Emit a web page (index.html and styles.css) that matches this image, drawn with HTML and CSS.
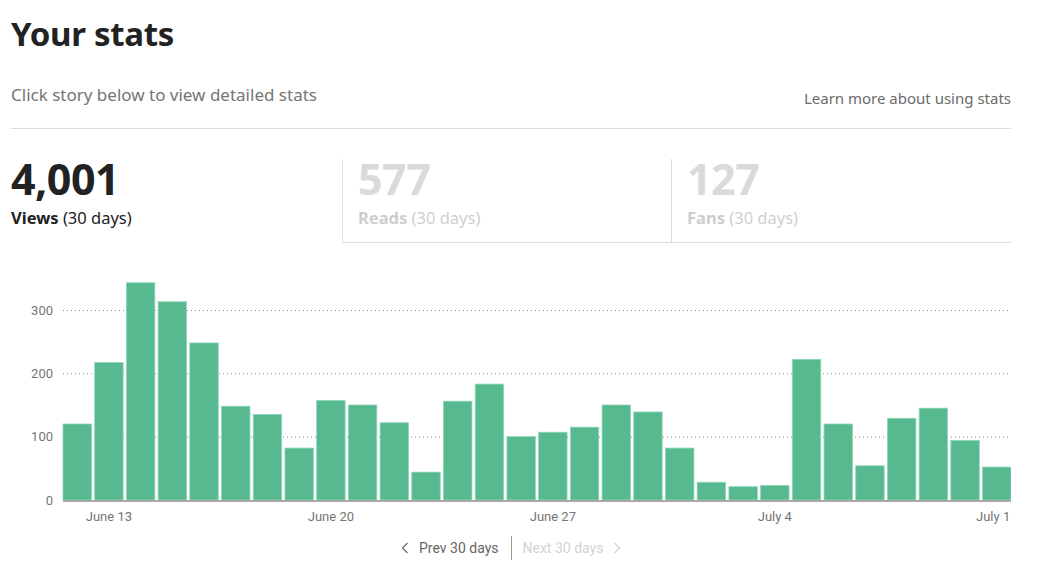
FILE: index.html
```html
<!DOCTYPE html>
<html lang="en">
<head>
<meta charset="utf-8">
<title>Your stats</title>
<link rel="stylesheet" href="styles.css">
</head>
<body>
<div class="page">
  <h1 class="title">Your stats</h1>
  <div class="subhead">
    <p class="hint">Click story below to view detailed stats</p>
    <a class="learn" href="#">Learn more about using stats</a>
  </div>
  <div class="tabs">
    <div class="tab tab-active">
      <div class="num">4,001</div>
      <div class="label"><b>Views</b> (30 days)</div>
    </div>
    <div class="tab">
      <div class="num">577</div>
      <div class="label"><b>Reads</b> (30 days)</div>
    </div>
    <div class="tab tab-last">
      <div class="num">127</div>
      <div class="label"><b>Fans</b> (30 days)</div>
    </div>
  </div>
  <div class="chart">
    <svg id="chart" width="1000" height="250" viewBox="0 0 1000 250"></svg>
  </div>
  <div class="pager">
    <a class="pg pg-prev" href="#"><svg class="chev" width="8" height="12" viewBox="0 0 8 12"><polyline points="6.5,1 1.5,6 6.5,11" fill="none" stroke="currentColor" stroke-width="1.2"/></svg>Prev 30 days</a>
    <span class="pg-sep"></span>
    <a class="pg pg-next" href="#">Next 30 days<svg class="chev" width="8" height="12" viewBox="0 0 8 12"><polyline points="1.5,1 6.5,6 1.5,11" fill="none" stroke="currentColor" stroke-width="1.2"/></svg></a>
  </div>
</div>
<script src="chart.js"></script>
</body>
</html>
```
FILE: styles.css
```css
html, body {
  margin: 0;
  padding: 0;
  background: #fff;
}
.page {
  width: 1000px;
  padding: 0 0 0 11px;
  font-family: "Noto Sans", "Open Sans", sans-serif;
  color: rgba(0,0,0,.84);
}
.title {
  margin: 0;
  padding-top: 12px;
  font-size: 33px;
  line-height: 44px;
  font-weight: 700;
  letter-spacing: -0.3px;
  color: #222;
}
.subhead {
  display: flex;
  justify-content: space-between;
  align-items: flex-end;
  margin-top: 27px;
  padding-bottom: 21px;
  border-bottom: 1px solid #dcdcdc;
}
.hint {
  margin: 0;
  font-size: 17px;
  line-height: 24px;
  color: #757575;
}
.learn {
  font-size: 15px;
  line-height: 20px;
  margin-bottom: -1px;
  color: #6b6b6b;
  text-decoration: none;
}
.tabs {
  display: grid;
  grid-template-columns: 331px 329px 1fr;
  margin-top: 30px;
}
.tab {
  height: 83px;
  padding-left: 15px;
  border-left: 1px solid #dedede;
  border-bottom: 1px solid #dedede;
  color: #cfcfcf;
}
.tab-last { padding-left: 15px; }
.tab-active {
  padding-left: 0;
  border: 0;
  color: #222;
}
.num {
  font-size: 43px;
  line-height: 44px;
  font-weight: 700;
  letter-spacing: -0.5px;
  margin-top: -2px;
}
.tab .num { color: #dadada; }
.tab-active .num { color: #222; }
.label {
  font-size: 16.5px;
  line-height: 22px;
  margin-top: 6px;
}
.tab .label b { color: #cdcdcd; }
.tab-active .label b { color: #222; }
.chart {
  margin-top: 32px;
  height: 250px;
}
.chart svg { display: block; }
.axis {
  font-family: "Liberation Sans Narrow", "Roboto", sans-serif;
  font-size: 13px;
  fill: #757575;
}
.bar {
  fill: #57b990;
  stroke: #8ad6b4;
  stroke-width: 0.8;
}
.grid {
  stroke: #8a8a8a;
  stroke-width: 1;
  stroke-dasharray: 1 3;
}
.baseline {
  stroke: #a8a8a8;
  stroke-width: 2;
}
.pager {
  display: flex;
  align-items: center;
  margin-top: 11px;
  margin-left: 390px;
  height: 24px;
  font-family: "Liberation Sans Narrow", "Roboto", sans-serif;
  font-size: 14px;
}
.pg {
  display: flex;
  align-items: center;
  gap: 10px;
  text-decoration: none;
}
.pg-prev { color: #666; }
.pg-next { color: #d2d2d2; }
.pg-sep {
  width: 1px;
  height: 24px;
  background: #999;
  margin: 0 11px 0 12px;
}
```
FILE: chart.js
```js
(function () {
  var data = [120,217,343,313,248,148,135,82,157,150,122,44,156,183,100,107,115,150,139,82,28,21,23,222,120,54,129,145,94,52];
  var svg = document.getElementById('chart');
  var NS = 'http://www.w3.org/2000/svg';
  var x0 = 52, slot = 31.71, bw = 28.4, base = 225, scale = 0.6333;
  function el(tag, attrs, text) {
    var e = document.createElementNS(NS, tag);
    for (var k in attrs) e.setAttribute(k, attrs[k]);
    if (text != null) e.textContent = text;
    svg.appendChild(e);
    return e;
  }
  [0, 100, 200, 300].forEach(function (v) {
    var y = base - v * scale;
    if (v > 0) el('line', {'class': 'grid', x1: x0, x2: 997, y1: y + 0.5, y2: y + 0.5});
    el('text', {'class': 'axis', x: 42, y: y + 4.5, 'text-anchor': 'end'}, String(v));
  });
  data.forEach(function (v, i) {
    var h = v * scale;
    el('rect', {'class': 'bar', x: x0 + i * slot, y: base - h, width: bw, height: h});
  });
  el('line', {'class': 'baseline', x1: x0, x2: 1000, y1: base + 1, y2: base + 1});
  var labels = [[1, 'June 13'], [8, 'June 20'], [15, 'June 27'], [22, 'July 4'], [29, 'July 11']];
  labels.forEach(function (l) {
    el('text', {'class': 'axis', x: x0 + l[0] * slot + bw / 2, y: base + 21, 'text-anchor': 'middle'}, l[1]);
  });
})();
```
